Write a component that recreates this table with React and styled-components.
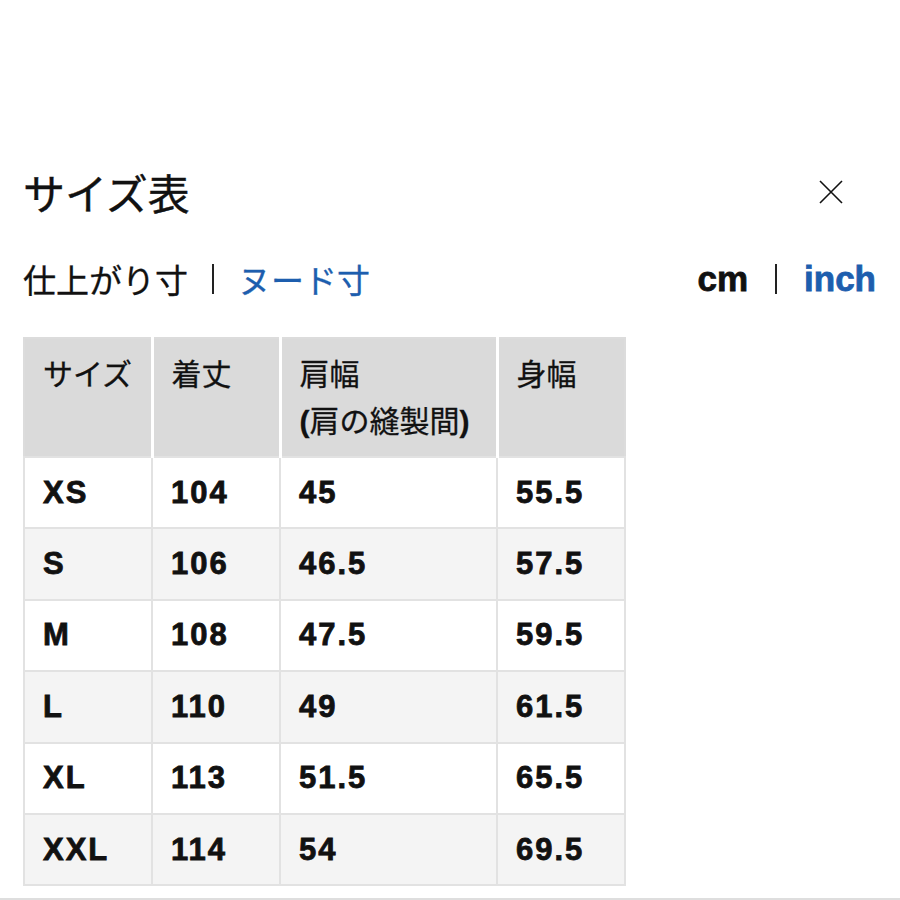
import React from 'react';
import styled, { createGlobalStyle } from 'styled-components';

const GlobalStyle = createGlobalStyle`
  html, body {
    margin: 0;
    padding: 0;
    background: #fff;
  }
  body {
    font-family: "Noto Sans CJK JP", "Noto Sans", sans-serif;
    color: #111;
  }
`;

const Page = styled.div`
  width: 900px;
  height: 900px;
  box-sizing: border-box;
  padding: 166px 24px 0 23px;
  display: flex;
  flex-direction: column;
  border-bottom: 2px solid #dedede;
  overflow: hidden;
`;

const TitleRow = styled.div`
  display: flex;
  align-items: center;
  justify-content: space-between;
  height: 52px;
`;

const Title = styled.h1`
  margin: 0;
  font-size: 42px;
  font-weight: 400;
  line-height: 52px;
  color: #111;
  -webkit-text-stroke: 0.4px #111;
`;

const CloseButton = styled.button`
  border: 0;
  background: none;
  padding: 0;
  margin-right: 33px;
  width: 24px;
  height: 24px;
  display: flex;
  align-items: center;
  justify-content: center;
  cursor: pointer;
`;

const TabsRow = styled.div`
  display: flex;
  align-items: center;
  justify-content: space-between;
  margin-top: 41px;
  height: 40px;
`;

const TabGroup = styled.div`
  display: flex;
  align-items: center;
`;

const Tab = styled.span`
  font-size: ${p => (p.$latin ? '35px' : '33px')};
  font-family: ${p =>
    p.$latin
      ? '"Liberation Sans", Arial, sans-serif'
      : '"Noto Sans CJK JP", sans-serif'};
  font-weight: ${p => (p.$latin ? 700 : 400)};
  line-height: 40px;
  color: ${p => (p.$active ? '#1d5eae' : '#111')};
  -webkit-text-stroke: ${p => (p.$latin ? '0.8px' : '0.3px')} currentColor;
`;

const Bar = styled.span`
  width: 2px;
  height: 30px;
  background: #222;
  margin: 0 ${p => (p.$wide ? '27px' : '24px')};
`;

const Table = styled.table`
  margin-top: 38px;
  width: 602px;
  border-collapse: collapse;
  border: 2px solid #dcdcdc;
  table-layout: fixed;
`;

const HeadCell = styled.th`
  background: #dadada;
  text-align: left;
  vertical-align: top;
  font-weight: 400;
  font-size: 30px;
  line-height: 47px;
  height: 119px;
  box-sizing: border-box;
  padding: 10px 12px 0 18px;
  border-right: 3px solid #fff;
  color: #111;
  -webkit-text-stroke: 0.3px #111;
  white-space: nowrap;
  &:last-child {
    border-right: 0;
  }
`;

const Paren = styled.span`
  font-family: "Liberation Sans", Arial, sans-serif;
  font-weight: 700;
`;

const Row = styled.tr`
  background: ${p => (p.$shade ? '#f4f4f4' : '#fff')};
`;

const Cell = styled.td`
  height: 71.4px;
  box-sizing: border-box;
  padding: 0 12px 0 18px;
  border: 2px solid #e2e2e2;
  font-family: "Liberation Sans", Arial, sans-serif;
  font-weight: 700;
  font-size: 31px;
  letter-spacing: 2px;
  color: #111;
  -webkit-text-stroke: 0.8px #111;
`;

const rows = [
  ['XS', '104', '45', '55.5'],
  ['S', '106', '46.5', '57.5'],
  ['M', '108', '47.5', '59.5'],
  ['L', '110', '49', '61.5'],
  ['XL', '113', '51.5', '65.5'],
  ['XXL', '114', '54', '69.5'],
];

const CloseIcon = () => (
  <svg width="24" height="24" viewBox="0 0 24 24" fill="none">
    <path d="M1 1L23 23M23 1L1 23" stroke="#111" strokeWidth="1.6" />
  </svg>
);

export default function App() {
  return (
    <>
      <GlobalStyle />
      <Page>
        <TitleRow>
          <Title>サイズ表</Title>
          <CloseButton aria-label="close">
            <CloseIcon />
          </CloseButton>
        </TitleRow>

        <TabsRow>
          <TabGroup>
            <Tab>仕上がり寸</Tab>
            <Bar />
            <Tab $active>ヌード寸</Tab>
          </TabGroup>
          <TabGroup>
            <Tab $latin>cm</Tab>
            <Bar $wide />
            <Tab $latin $active>inch</Tab>
          </TabGroup>
        </TabsRow>

        <Table>
          <colgroup>
            <col style={{ width: 128 }} />
            <col style={{ width: 128 }} />
            <col style={{ width: 217 }} />
            <col style={{ width: 128 }} />
          </colgroup>
          <thead>
            <tr>
              <HeadCell>サイズ</HeadCell>
              <HeadCell>着丈</HeadCell>
              <HeadCell>
                肩幅
                <br />
                <Paren>(</Paren>肩の縫製間<Paren>)</Paren>
              </HeadCell>
              <HeadCell>身幅</HeadCell>
            </tr>
          </thead>
          <tbody>
            {rows.map((r, i) => (
              <Row key={r[0]} $shade={i % 2 === 1}>
                {r.map((v, j) => (
                  <Cell key={j}>{v}</Cell>
                ))}
              </Row>
            ))}
          </tbody>
        </Table>
      </Page>
    </>
  );
}
